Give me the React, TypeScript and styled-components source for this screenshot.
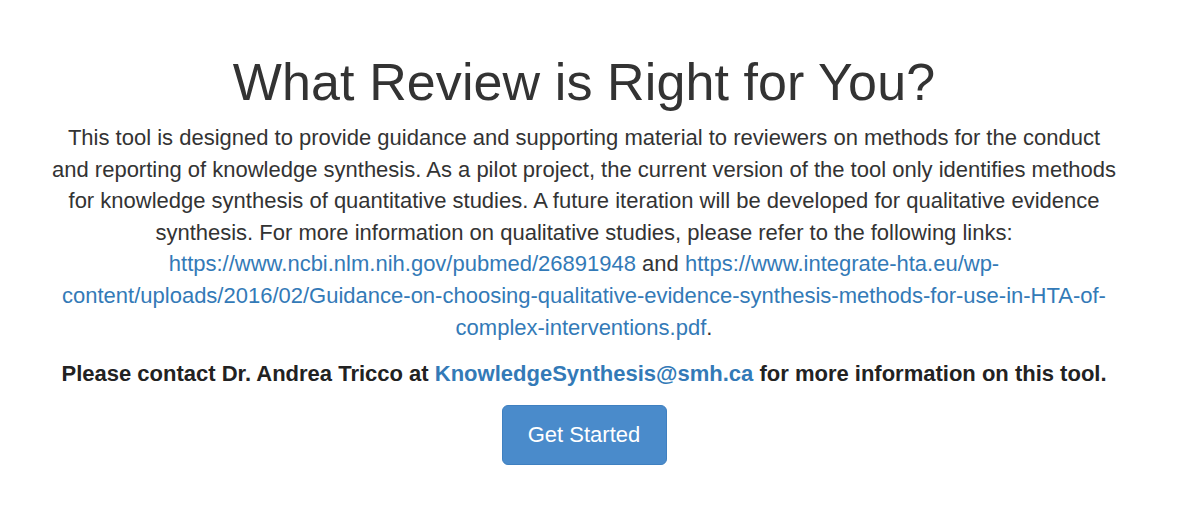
import React from 'react'
import styled, {createGlobalStyle} from 'styled-components'

const GlobalStyle = createGlobalStyle`
  html, body {
    margin: 0;
    padding: 0;
    background: #fff;
  }

  body {
    font-family: "Liberation Sans", Arial, Helvetica, sans-serif;
    color: #333;
  }
`

const Page = styled.main`
  display: flex;
  justify-content: center;
  padding: 52px 32px 0 0;
`

const Intro = styled.section`
  display: flex;
  flex-direction: column;
  align-items: center;
  width: 1070px;
  text-align: center;
`

const Title = styled.h1`
  margin: 0;
  font-size: 52px;
  font-weight: 400;
  line-height: 60px;
  letter-spacing: 0.1px;
  color: #333;
`

const Description = styled.p`
  margin: 10px 0 0;
  font-size: 22px;
  line-height: 31.6px;
`

const Link = styled.a`
  color: #337ab7;
  text-decoration: none;
`

const Contact = styled.p`
  margin: 16px 0 0;
  font-size: 22px;
  font-weight: 700;
  line-height: 30px;
  color: #222;
`

const StartButton = styled.button`
  margin-top: 16px;
  width: 165px;
  height: 60px;
  border: 1px solid #3f80c0;
  border-radius: 6px;
  background: #4a8bcb;
  color: #fff;
  font-family: inherit;
  font-size: 22px;
  cursor: pointer;
`

export default function App() {
  return (
    <>
      <GlobalStyle />
      <Page>
        <Intro>
          <Title>What Review is Right for You?</Title>
          <Description>
            This tool is designed to provide guidance and supporting material to reviewers on methods for the conduct
            and reporting of knowledge synthesis. As a pilot project, the current version of the tool only identifies
            methods for knowledge synthesis of quantitative studies. A future iteration will be developed for
            qualitative evidence synthesis. For more information on qualitative studies, please refer to the
            following links:{' '}
            <Link href="#">https://www.ncbi.nlm.nih.gov/pubmed/26891948</Link> and{' '}
            <Link href="#">
              https://www.integrate-hta.eu/wp-content/uploads/2016/02/Guidance-on-choosing-qualitative-evidence-synthesis-methods-for-use-in-HTA-of-complex-interventions.pdf
            </Link>
            .
          </Description>
          <Contact>
            Please contact Dr. Andrea Tricco at <Link href="#">KnowledgeSynthesis@smh.ca</Link> for more
            information on this tool.
          </Contact>
          <StartButton>Get Started</StartButton>
        </Intro>
      </Page>
    </>
  )
}
